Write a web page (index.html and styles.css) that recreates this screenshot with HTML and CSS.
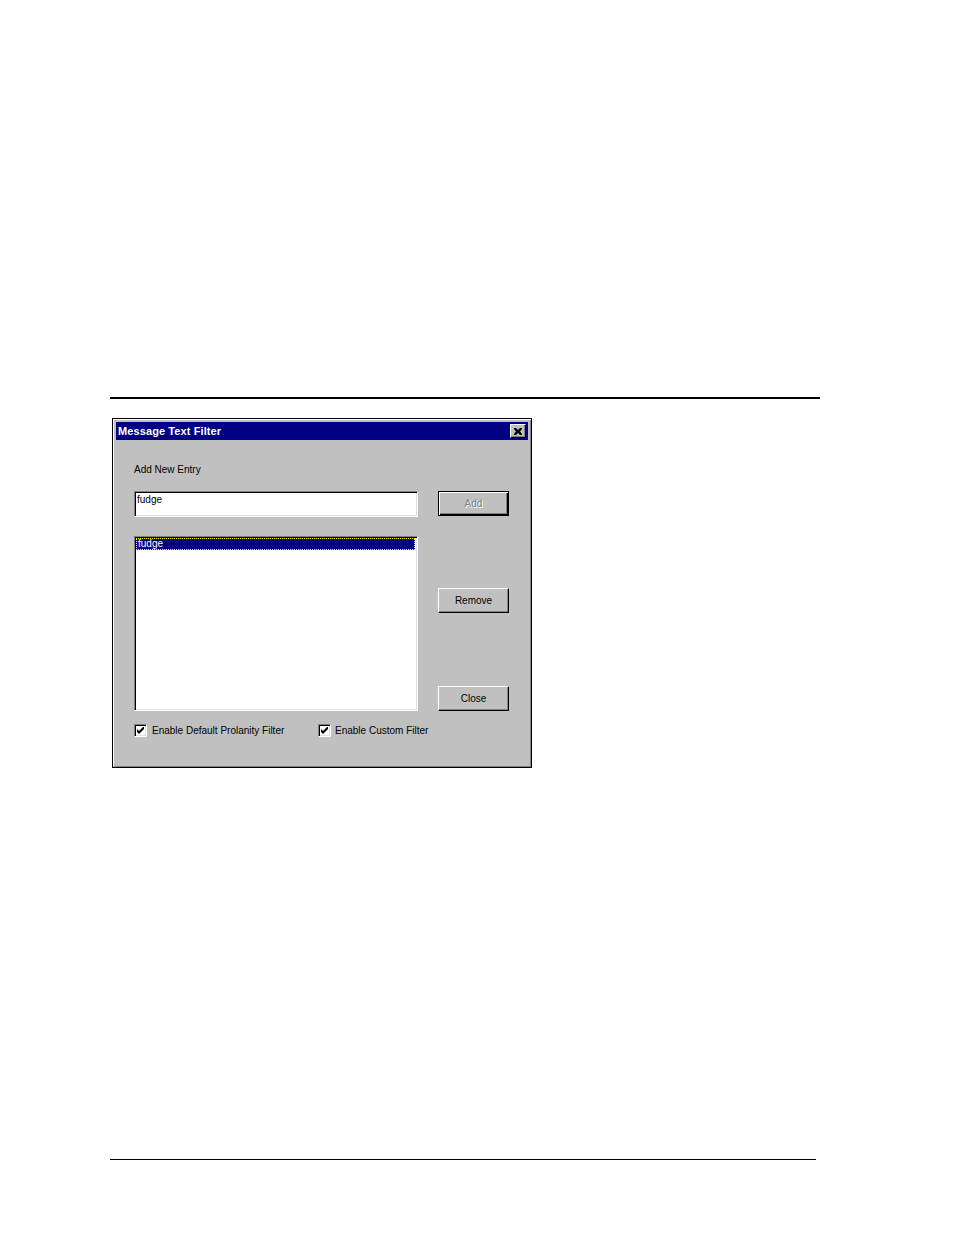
FILE: index.html
```html
<!DOCTYPE html>
<html>
<head>
<meta charset="utf-8">
<link rel="stylesheet" href="styles.css">
</head>
<body>
<div class="page">
  <div class="rule-top"></div>
  <div class="dialog">
    <div class="titlebar">
      <span class="title">Message Text Filter</span>
      <span class="closebox">
        <svg width="8" height="7" viewBox="0 0 8 7"><path d="M0 0h2l2 2 2-2h2v1L6 3.5 8 6v1H6L4 5 2 7H0V6l2-2.5L0 1z" fill="#000"/></svg>
      </span>
    </div>
    <div class="body">
      <div class="label">Add New Entry</div>
      <div class="field">fudge</div>
      <div class="btn btn-default disabled">Add</div>
      <div class="listbox">
        <div class="item selected">fudge</div>
      </div>
      <div class="side">
        <div class="btn">Remove</div>
        <div class="btn">Close</div>
      </div>
      <div class="checks">
        <div class="check">
          <span class="box"><svg width="7" height="7" viewBox="0 0 7 7"><path d="M0 2v3l2 2 5-5V-1L2 4z" fill="#000"/></svg></span>
          <span>Enable Default Prolanity Filter</span>
        </div>
        <div class="check second">
          <span class="box"><svg width="7" height="7" viewBox="0 0 7 7"><path d="M0 2v3l2 2 5-5V-1L2 4z" fill="#000"/></svg></span>
          <span>Enable Custom Filter</span>
        </div>
      </div>
    </div>
  </div>
  <div class="rule-bottom"></div>
</div>
</body>
</html>
```

FILE: styles.css
```css
html, body {
  margin: 0;
  padding: 0;
  background: #fff;
}

.page {
  padding-top: 397px;
  font-family: "Liberation Sans", Arial, sans-serif;
  font-size: 11px;
  color: #000;
}

.rule-top {
  margin-left: 110px;
  width: 710px;
  height: 2px;
  background: #000;
}

.rule-bottom {
  margin-left: 110px;
  margin-top: 391px;
  width: 706px;
  height: 1px;
  background: #000;
}

.dialog {
  margin: 19px 0 0 112px;
  width: 420px;
  height: 350px;
  box-sizing: border-box;
  border: 1px solid #000;
  padding: 3px 3px 3px 2px;
  background: #c0c0c0;
  box-shadow: inset 1px 1px 0 #fff, inset -1px -1px 0 #808080;
}

.titlebar {
  height: 18px;
  background: #000080;
  display: flex;
  align-items: center;
  justify-content: space-between;
  padding: 0 2px 0 2px;
  margin-left: 1px;
}

.title {
  color: #fff;
  font-weight: bold;
  font-size: 11px;
  letter-spacing: 0.1px;
}

.closebox {
  width: 16px;
  height: 14px;
  box-sizing: border-box;
  background: #c0c0c0;
  border: 1px solid;
  border-color: #fff #000 #000 #fff;
  box-shadow: inset -1px -1px 0 #808080;
  display: flex;
  align-items: center;
  justify-content: center;
}

.body {
  display: grid;
  grid-template-columns: 284px 71px;
  column-gap: 20px;
  padding: 23px 0 0 19px;
}

.label {
  grid-column: 1 / 3;
  height: 13px;
  line-height: 13px;
  margin-bottom: 15px;
  font-size: 10px;
}

.field {
  height: 26px;
  box-sizing: border-box;
  background: #fff;
  border: 1px solid;
  border-color: #808080 #fff #fff #808080;
  box-shadow: inset 1px 1px 0 #000, inset -1px -1px 0 #dfdfdf;
  padding: 2px 2px;
  line-height: 12px;
  font-size: 10px;
}

.btn {
  height: 25px;
  box-sizing: border-box;
  background: #c0c0c0;
  border: 1px solid;
  border-color: #fff #000 #000 #fff;
  box-shadow: inset -1px -1px 0 #808080;
  display: flex;
  align-items: center;
  justify-content: center;
  font-size: 10px;
}

.btn-default {
  border-color: #000;
  box-shadow: inset 1px 1px 0 #fff, inset -1px -1px 0 #000, inset -2px -2px 0 #808080;
}

.disabled {
  color: #808080;
  text-shadow: 1px 1px 0 #fff;
}

.listbox {
  margin-top: 19px;
  height: 175px;
  box-sizing: border-box;
  background: #fff;
  border: 1px solid;
  border-color: #808080 #fff #fff #808080;
  box-shadow: inset 1px 1px 0 #000, inset -1px -1px 0 #dfdfdf;
  padding: 1px 2px 2px 1px;
}

.item {
  height: 12px;
  line-height: 11px;
  padding-left: 2px;
  font-size: 10px;
}

.selected {
  background: #000080;
  color: #fff;
  outline: 1px dotted #ffff00;
  outline-offset: -1px;
}

.side {
  margin-top: 19px;
  display: flex;
  flex-direction: column;
  justify-content: space-between;
  padding-top: 52px;
}

.checks {
  grid-column: 1 / 3;
  display: flex;
  margin-top: 13px;
  font-size: 10px;
}

.check {
  display: flex;
  align-items: center;
  gap: 5px;
  height: 13px;
  width: 184px;
}

.box {
  width: 13px;
  height: 13px;
  box-sizing: border-box;
  background: #fff;
  border: 1px solid;
  border-color: #808080 #fff #fff #808080;
  box-shadow: inset 1px 1px 0 #000, inset -1px -1px 0 #dfdfdf;
  display: flex;
  align-items: center;
  justify-content: center;
}

.second {
  width: auto;
  gap: 4px;
}
```
